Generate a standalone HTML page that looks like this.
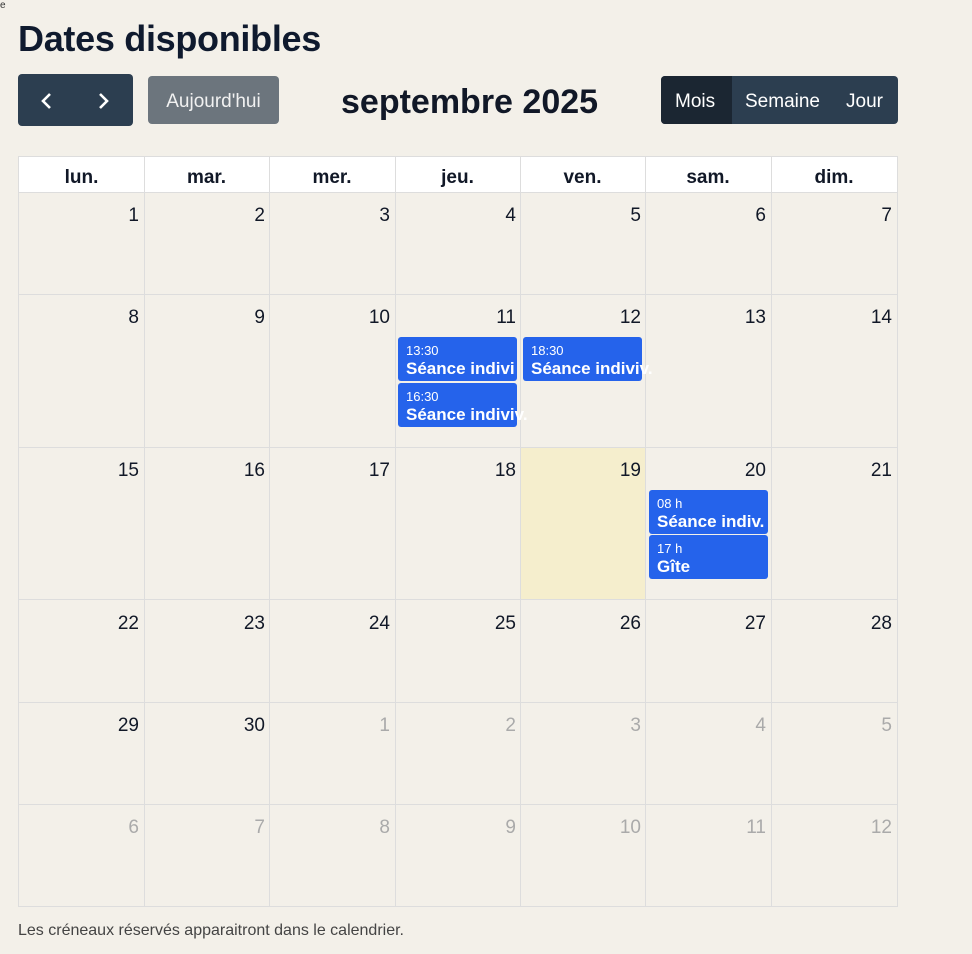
<!DOCTYPE html>
<html><head><meta charset="utf-8"><style>
*{box-sizing:border-box;margin:0;padding:0}
body{width:972px;height:954px;background:#f3f0e9;font-family:"Liberation Sans",sans-serif;color:#111827;position:relative;overflow:hidden}
.a{position:absolute}
h1{position:absolute;left:18px;top:18px;font-size:36px;font-weight:bold;color:#0f1a2e;letter-spacing:-0.3px}
.nav{left:18px;top:74px;width:115px;height:52px;background:#2c3e50;border-radius:4px}
.today{left:148px;top:76px;width:131px;height:48px;background:#6c757d;border-radius:4px;color:#f1f1f1;font-size:19px;line-height:52px;text-align:center}
.title{left:341px;top:83px;font-size:34px;font-weight:bold;color:#111827}
.grp{left:661px;top:76px;width:237px;height:48px;background:#2c3e50;border-radius:4px;color:#fff;font-size:19px;line-height:52px;overflow:hidden}
.grp span{position:absolute;top:0}
.hd{top:156px;height:37px;background:#fff;font-weight:bold;font-size:19px;text-align:center;line-height:42px;border:1px solid #ddd;border-left:none;border-bottom:none}
.v{top:156px;width:1px;height:751px;background:#ddd}
.h{left:18px;width:880px;height:1px;background:#ddd}
.n{font-size:19px;text-align:right;width:120px}
.g{color:#aaa}
.ev{background:#2563eb;border-radius:3px;color:#fff;width:119px;height:44px;white-space:nowrap;overflow:visible;padding:7px 0 0 8px}
.ev i{display:block;font-style:normal;font-size:13px;line-height:14px}
.ev b{display:block;font-size:17px;line-height:22px}
.foot{left:18px;top:922px;font-size:16px;color:#444}
</style></head><body>
<div class="a" style="left:0;top:0;font-size:10px;color:#333">e</div>
<h1>Dates disponibles</h1>
<div class="a nav">
<svg class="a" style="left:22px;top:18px" width="14" height="18"><path d="M10 2 L3 9 L10 16" stroke="#fff" stroke-width="2.6" fill="none"/></svg>
<svg class="a" style="left:78px;top:18px" width="14" height="18"><path d="M4 2 L11 9 L4 16" stroke="#fff" stroke-width="2.6" fill="none"/></svg>
</div>
<div class="a today">Aujourd'hui</div>
<div class="a title">septembre 2025</div>
<div class="a grp"><div class="a" style="left:0;top:0;width:71px;height:48px;background:#1b2632"></div><span style="left:14px">Mois</span><span style="left:84px">Semaine</span><span style="left:185px">Jour</span></div>

<div class="a" style="left:521px;top:448px;width:124px;height:151px;background:#f5eecd"></div>

<div class="a hd" style="left:18px;width:127px;border-left:1px solid #ddd">lun.</div>
<div class="a hd" style="left:144px;width:126px">mar.</div>
<div class="a hd" style="left:269px;width:127px">mer.</div>
<div class="a hd" style="left:395px;width:126px">jeu.</div>
<div class="a hd" style="left:520px;width:126px">ven.</div>
<div class="a hd" style="left:645px;width:127px">sam.</div>
<div class="a hd" style="left:771px;width:127px">dim.</div>

<div class="a v" style="left:18px"></div><div class="a v" style="left:144px"></div><div class="a v" style="left:269px"></div><div class="a v" style="left:395px"></div><div class="a v" style="left:520px"></div><div class="a v" style="left:645px"></div><div class="a v" style="left:771px"></div><div class="a v" style="left:897px"></div>
<div class="a h" style="top:192px"></div><div class="a h" style="top:294px"></div><div class="a h" style="top:447px"></div><div class="a h" style="top:599px"></div><div class="a h" style="top:702px"></div><div class="a h" style="top:804px"></div><div class="a h" style="top:906px"></div>

<div class="a n" style="left:19px;top:205px">1</div><div class="a n" style="left:145px;top:205px">2</div><div class="a n" style="left:270px;top:205px">3</div><div class="a n" style="left:396px;top:205px">4</div><div class="a n" style="left:521px;top:205px">5</div><div class="a n" style="left:646px;top:205px">6</div><div class="a n" style="left:772px;top:205px">7</div>
<div class="a n" style="left:19px;top:307px">8</div><div class="a n" style="left:145px;top:307px">9</div><div class="a n" style="left:270px;top:307px">10</div><div class="a n" style="left:396px;top:307px">11</div><div class="a n" style="left:521px;top:307px">12</div><div class="a n" style="left:646px;top:307px">13</div><div class="a n" style="left:772px;top:307px">14</div>
<div class="a n" style="left:19px;top:460px">15</div><div class="a n" style="left:145px;top:460px">16</div><div class="a n" style="left:270px;top:460px">17</div><div class="a n" style="left:396px;top:460px">18</div><div class="a n" style="left:521px;top:460px">19</div><div class="a n" style="left:646px;top:460px">20</div><div class="a n" style="left:772px;top:460px">21</div>
<div class="a n" style="left:19px;top:613px">22</div><div class="a n" style="left:145px;top:613px">23</div><div class="a n" style="left:270px;top:613px">24</div><div class="a n" style="left:396px;top:613px">25</div><div class="a n" style="left:521px;top:613px">26</div><div class="a n" style="left:646px;top:613px">27</div><div class="a n" style="left:772px;top:613px">28</div>
<div class="a n" style="left:19px;top:715px">29</div><div class="a n" style="left:145px;top:715px">30</div><div class="a n g" style="left:270px;top:715px">1</div><div class="a n g" style="left:396px;top:715px">2</div><div class="a n g" style="left:521px;top:715px">3</div><div class="a n g" style="left:646px;top:715px">4</div><div class="a n g" style="left:772px;top:715px">5</div>
<div class="a n g" style="left:19px;top:817px">6</div><div class="a n g" style="left:145px;top:817px">7</div><div class="a n g" style="left:270px;top:817px">8</div><div class="a n g" style="left:396px;top:817px">9</div><div class="a n g" style="left:521px;top:817px">10</div><div class="a n g" style="left:646px;top:817px">11</div><div class="a n g" style="left:772px;top:817px">12</div>

<div class="a ev" style="left:398px;top:337px"><i>13:30</i><b>Séance indivi</b></div>
<div class="a ev" style="left:398px;top:383px"><i>16:30</i><b>Séance indiviv.</b></div>
<div class="a ev" style="left:523px;top:337px"><i>18:30</i><b>Séance indiviv.</b></div>
<div class="a ev" style="left:649px;top:490px"><i>08 h</i><b>Séance indiv.</b></div>
<div class="a ev" style="left:649px;top:535px"><i>17 h</i><b>Gîte</b></div>

<div class="a foot">Les créneaux réservés apparaitront dans le calendrier.</div>
</body></html>
